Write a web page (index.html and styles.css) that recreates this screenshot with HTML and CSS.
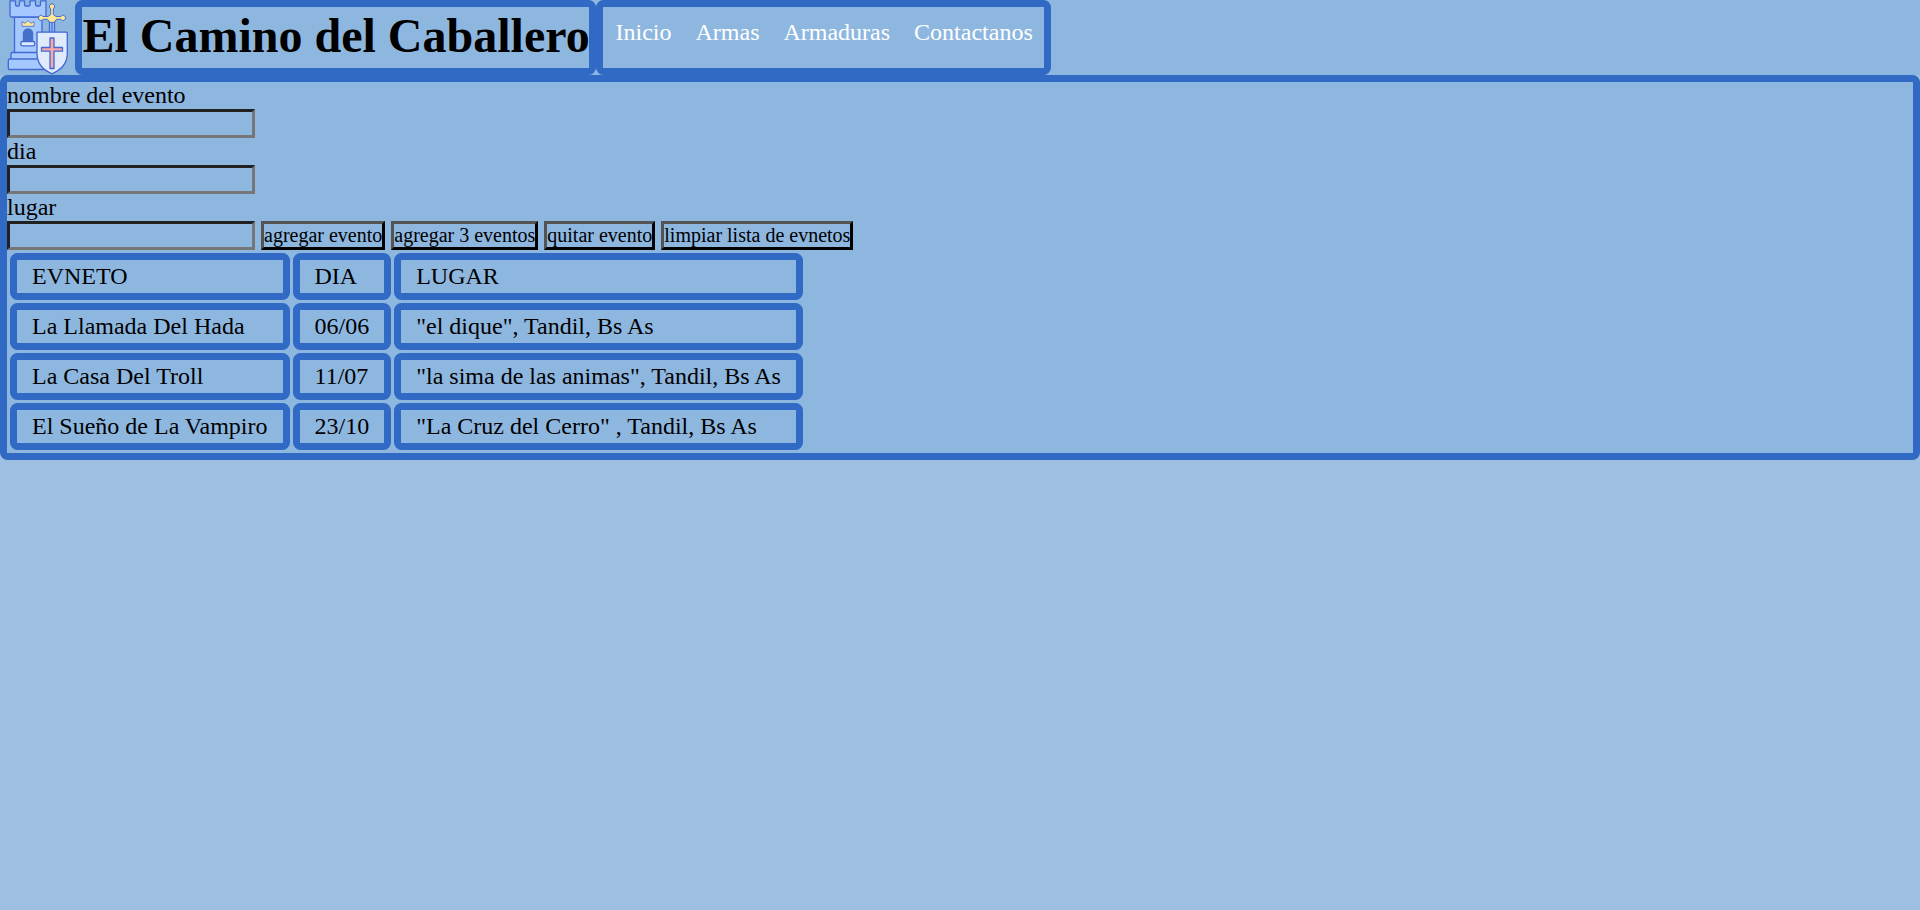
FILE: index.html
```html
<!DOCTYPE html>
<html lang="es">
<head>
<meta charset="utf-8">
<title>El Camino del Caballero</title>
<link rel="stylesheet" href="styles.css">
</head>
<body>
<header class="header">
  <svg class="logo" viewBox="0 0 75 75" stroke="#4169d2" stroke-width="1.3" stroke-linejoin="round">
    <path fill="#a4c8ff" d="M14.500 17H42V53H14.500Z"/>
    <path fill="#a4c8ff" d="M11 53.500Q11 52.500 12 52.500H45V60H11Z"/>
    <path fill="#a4c8ff" d="M8.300 60.500Q8.300 59 10 59H48V69.500H9.500Q8.300 69.500 8.300 68.500Z"/>
    <path fill="#a4c8ff" d="M10 .8H15.500V5Q15.500 6 17 6H18Q19.500 6 19.500 5V.8H24.500V5Q24.500 6 26 6H28.500Q30 6 30 5V.8H35.500V5Q35.500 6 37 6H39Q40.500 6 40.500 5V.8H46V15Q46 17 44.500 17H11.500Q10 17 10 15Z"/>
    <path fill="#466fc8" stroke="none" d="M22.800 42V33.500A5.200 5.200 0 0 1 33.200 33.500V42Z"/>
    <rect x="20.800" y="41.500" width="14" height="4.300" rx="1.800" fill="#dfeafc"/>
    <path fill="#ffe88f" stroke-width=".8" d="M22 21.500L25 23.300L28 20.500L31 23.300L34 21.500V26.300H22Z"/>
    <path fill="#a4c8ff" d="M49.500 20H54.500V35H49.500Z"/>
    <path fill="none" d="M52 22V35"/>
    <path fill="#ffe88f" stroke-width="1" d="M50.700 8.700A2.600 2.600 0 1 1 53.300 8.700V14.500L56 16.500H60.800A2.600 2.600 0 1 1 60.800 19.300H56.500L54.300 22.300H49.700L47.500 19.300H43.200A2.600 2.600 0 1 1 43.200 16.500H48L50.700 14.500Z"/>
    <path fill="#dfeafc" d="M37 33Q37 32.200 38 32.200H66Q67.300 32.200 67.300 33V53C67.300 65 60 70 52 73.800C44 70 37 65 37 53Z"/>
    <path fill="#f9a7a7" d="M50 38H54V47.500H62.500V51.200H54V68.500H50V51.200H41.500V47.500H50Z"/>
  </svg>
  <h1 class="title">El Camino del Caballero</h1>
  <nav class="nav">
    <a class="nav-link">Inicio</a>
    <a class="nav-link">Armas</a>
    <a class="nav-link">Armaduras</a>
    <a class="nav-link">Contactanos</a>
  </nav>
</header>
<main class="panel">
  <label class="label" for="nombre">nombre del evento</label>
  <input class="field" id="nombre" type="text">
  <label class="label" for="dia">dia</label>
  <input class="field" id="dia" type="text">
  <label class="label" for="lugar">lugar</label>
  <div class="actions">
    <input class="field" id="lugar" type="text">
    <button class="button">agregar evento</button>
    <button class="button">agregar 3 eventos</button>
    <button class="button">quitar evento</button>
    <button class="button">limpiar lista de evnetos</button>
  </div>
  <table class="events">
    <tr><td>EVNETO</td><td>DIA</td><td>LUGAR</td></tr>
    <tr><td>La Llamada Del Hada</td><td>06/06</td><td>"el dique", Tandil, Bs As</td></tr>
    <tr><td>La Casa Del Troll</td><td>11/07</td><td>"la sima de las animas", Tandil, Bs As</td></tr>
    <tr><td>El Sueño de La Vampiro</td><td>23/10</td><td>"La Cruz del Cerro" , Tandil, Bs As</td></tr>
  </table>
</main>
</body>
</html>
```
FILE: styles.css
```css
* {
  box-sizing: border-box;
  margin: 0;
  padding: 0;
}

body {
  min-height: 100vh;
  background: #9ebfe2;
  color: #000;
  font: 24px/27px "Liberation Serif", "Times New Roman", serif;
}

.header {
  display: flex;
  height: 75px;
  background: #8eb7e0;
}

.logo {
  width: 75px;
  height: 75px;
}

.title,
.nav,
.panel,
.events td {
  border: 7px solid #306ac4;
  border-radius: 7.5px;
}

.title {
  width: 521px;
  padding-left: 0.5px;
  font-size: 48px;
  line-height: 57px;
  white-space: nowrap;
}

.nav {
  display: flex;
  gap: 24px;
  width: 455px;
  padding: 12px 0 0 12.5px;
  color: #fff;
}

.panel {
  display: flex;
  flex-direction: column;
  align-items: flex-start;
  height: 385px;
  background: #8eb7e0;
}

.label {
  height: 27px;
}

.field {
  width: 248px;
  height: 29px;
  border: 3px inset #767676;
  background: transparent;
  font: 20px "Liberation Serif", serif;
}

.actions {
  display: flex;
  gap: 6px;
}

.button {
  height: 29px;
  border: 3px outset #000;
  background: transparent;
  color: #000;
  font: 20px/23px "Liberation Serif", "Times New Roman", serif;
  white-space: nowrap;
}

.events {
  border-spacing: 3px;
}

.events td {
  height: 47px;
  padding: 3px 15px;
  white-space: nowrap;
}
```
